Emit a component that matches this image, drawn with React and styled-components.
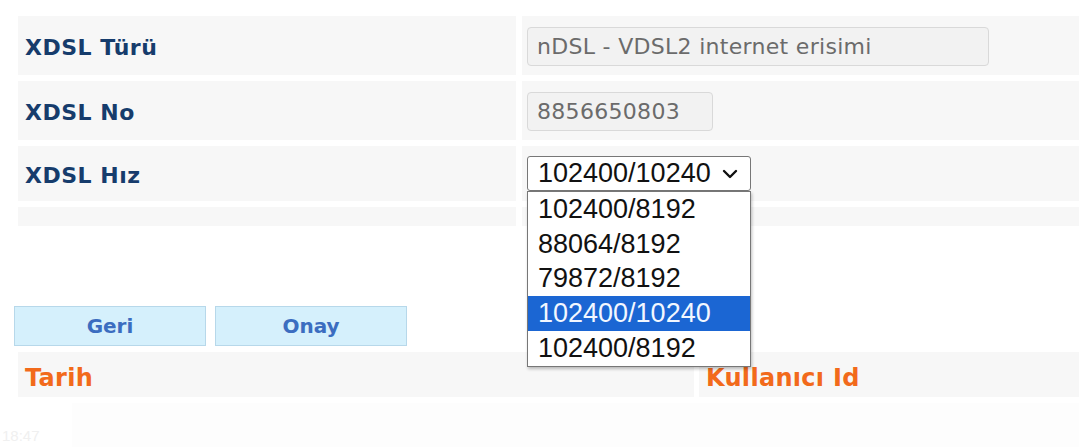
import React from 'react';
import styled, { createGlobalStyle } from 'styled-components';

const GlobalStyle = createGlobalStyle`
	html, body {
		margin: 0;
		padding: 0;
		background: #ffffff;
		overflow: hidden;
	}
	body {
		font-family: 'DejaVu Sans', Verdana, sans-serif;
	}
`;

const speeds = ['102400/8192', '88064/8192', '79872/8192', '102400/10240', '102400/8192'];

const App = () => {
	return (
		<Page>
			<GlobalStyle />
			<FormTable>
				<Label>XDSL Türü</Label>
				<Cell>
					<ReadOnlyBox width="462px">nDSL - VDSL2 internet erisimi</ReadOnlyBox>
				</Cell>

				<Label>XDSL No</Label>
				<Cell>
					<ReadOnlyBox width="186px">8856650803</ReadOnlyBox>
				</Cell>

				<Label short>XDSL Hız</Label>
				<Cell short>
					<SelectWrap>
						<SelectBox>
							<span>102400/10240</span>
							<svg width="16" height="10" viewBox="0 0 16 10">
								<path d="M2 2 L8 8 L14 2" fill="none" stroke="#111" strokeWidth="2.4" strokeLinecap="round" strokeLinejoin="round" />
							</svg>
						</SelectBox>
						<OptionList>
							{speeds.map((s, i) => (
								<Option key={i} selected={i === 3}>{s}</Option>
							))}
						</OptionList>
					</SelectWrap>
				</Cell>

				<Filler />
				<Filler />
			</FormTable>

			<ButtonRow>
				<ActionButton>Geri</ActionButton>
				<ActionButton>Onay</ActionButton>
			</ButtonRow>

			<HeaderTable>
				<HeaderCell>Tarih</HeaderCell>
				<HeaderCell>Kullanıcı Id</HeaderCell>
			</HeaderTable>

			<FadedRow>
				<FadedTime>18:47</FadedTime>
				<FadedCell />
			</FadedRow>
		</Page>
	);
};

export default App;

const Page = styled.div`
	width: 1079px;
	height: 447px;
	padding-top: 16px;
	box-sizing: border-box;
`;

const FormTable = styled.div`
	display: grid;
	grid-template-columns: 498px 1fr;
	column-gap: 6px;
	row-gap: 6px;
	margin-left: 18px;
	margin-right: -20px;
`;

const Label = styled.div`
	background: #f7f7f7;
	height: ${(p) => (p.short ? '55px' : '59px')};
	box-sizing: border-box;
	display: flex;
	align-items: center;
	padding-left: 7px;
	padding-top: 3px;
	font-family: 'DejaVu Sans', Verdana, sans-serif;
	font-weight: bold;
	font-size: 22px;
	letter-spacing: 0.5px;
	color: #163c6c;
`;

const Cell = styled.div`
	background: #f7f7f7;
	height: ${(p) => (p.short ? '55px' : '59px')};
	display: flex;
	align-items: center;
	padding-left: 5px;
	position: relative;
`;

const Filler = styled.div`
	background: #f7f7f7;
	height: 19px;
`;

const ReadOnlyBox = styled.div`
	width: ${(p) => p.width};
	height: 39px;
	box-sizing: border-box;
	border: 1px solid #d9d9d9;
	border-radius: 4px;
	background: #f2f2f2;
	color: #6b6b6b;
	font-family: 'DejaVu Sans', Verdana, sans-serif;
	font-size: 22px;
	letter-spacing: 0.3px;
	display: flex;
	align-items: center;
	padding-left: 9px;
	margin-top: 2px;
`;

const SelectWrap = styled.div`
	position: relative;
	width: 224px;
`;

const SelectBox = styled.div`
	height: 35px;
	box-sizing: border-box;
	border: 1px solid #777;
	border-radius: 3px;
	background: #fff;
	display: flex;
	align-items: center;
	justify-content: space-between;
	padding: 0 12px 0 10px;
	font-family: 'Liberation Sans', Arial, sans-serif;
	font-size: 27px;
	color: #111;
`;

const OptionList = styled.div`
	position: absolute;
	top: 35px;
	left: 0;
	width: 224px;
	box-sizing: border-box;
	border: 1px solid #777;
	background: #fff;
	box-shadow: 1px 2px 3px rgba(0, 0, 0, 0.25);
	z-index: 5;
`;

const Option = styled.div`
	height: 34.8px;
	display: flex;
	align-items: center;
	padding-left: 10px;
	font-family: 'Liberation Sans', Arial, sans-serif;
	font-size: 27px;
	color: ${(p) => (p.selected ? '#f2f7ff' : '#111')};
	background: ${(p) => (p.selected ? '#1b66d3' : '#fff')};
`;

const ButtonRow = styled.div`
	display: flex;
	gap: 9px;
	margin-left: 14px;
	margin-top: 80px;
`;

const ActionButton = styled.button`
	width: 192px;
	height: 40px;
	background: #d5f0fc;
	border: 1px solid #b7d8ea;
	font-family: 'DejaVu Sans', Verdana, sans-serif;
	font-weight: bold;
	font-size: 20px;
	color: #3b6dc0;
	cursor: pointer;
	padding: 0;
`;

const HeaderTable = styled.div`
	display: grid;
	grid-template-columns: 676px 1fr;
	column-gap: 5px;
	margin-left: 18px;
	margin-top: 6px;
`;

const HeaderCell = styled.div`
	background: #f7f7f7;
	height: 45px;
	display: flex;
	align-items: center;
	padding-left: 7px;
	padding-top: 6px;
	box-sizing: border-box;
	font-family: 'DejaVu Sans', Verdana, sans-serif;
	font-weight: bold;
	font-size: 24px;
	letter-spacing: 0.3px;
	color: #f26a1b;
`;

const FadedRow = styled.div`
	display: flex;
	align-items: flex-end;
	height: 50px;
`;

const FadedTime = styled.div`
	width: 70px;
	padding-left: 2px;
	padding-bottom: 3px;
	font-family: 'Liberation Sans', Arial, sans-serif;
	font-size: 15px;
	color: #f0f0f0;
`;

const FadedCell = styled.div`
	flex: 1;
	height: 44px;
	background: #fdfdfd;
`;
